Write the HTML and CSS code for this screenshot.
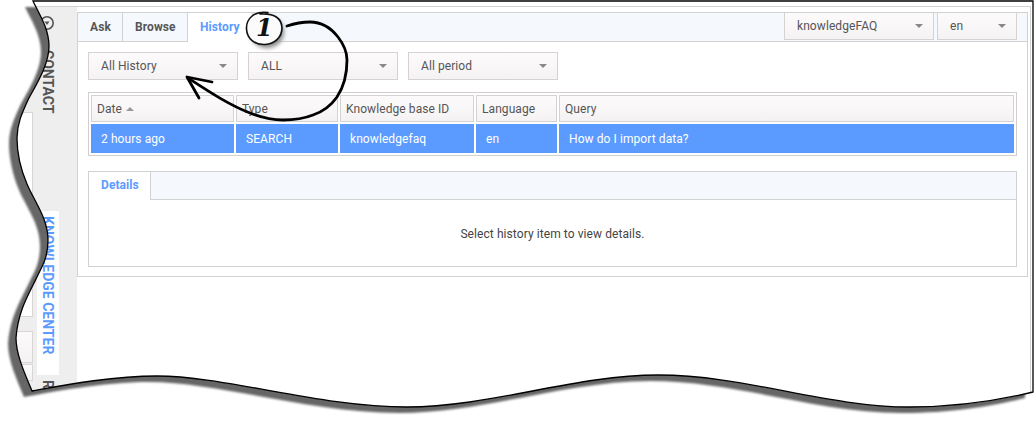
FILE: index.html
```html
<!DOCTYPE html>
<html lang="en">
<head>
<meta charset="utf-8">
<title>Knowledge Center History</title>
<link rel="stylesheet" href="styles.css">
</head>
<body>
<div class="stage">
  <div class="app">
    <div class="leftcol">
      <div class="lbox lbox-a"></div>
      <div class="lbox lbox-b"></div>
      <div class="lbox lbox-c"></div>
    </div>
    <div class="rail">
      <svg class="rail-icon" width="16" height="16" viewBox="0 0 16 16"><circle cx="8" cy="8" r="6.2" fill="none" stroke="#555" stroke-width="1.6"/><path d="M5.5 6.5h5L8 10z" fill="#555"/></svg>
      <div class="rail-item contact"><span class="vtext">CONTACT</span></div>
      <div class="rail-item knowledge"><span class="vtext">KNOWLEDGE CENTER</span></div>
      <div class="rail-item rest"><span class="vtext">R</span></div>
    </div>
    <main class="main">
      <section class="panel">
        <div class="tabbar">
          <div class="tab">Ask</div>
          <div class="tab">Browse</div>
          <div class="tab tab-active">History</div>
          <div class="bar-right">
            <div class="select select-kb"><span>knowledgeFAQ</span><i class="caret"></i></div>
            <div class="select select-lang"><span>en</span><i class="caret"></i></div>
          </div>
        </div>
        <div class="panel-body">
          <div class="filters">
            <div class="select select-filter"><span>All History</span><i class="caret"></i></div>
            <div class="select select-filter"><span>ALL</span><i class="caret"></i></div>
            <div class="select select-filter"><span>All period</span><i class="caret"></i></div>
          </div>
          <div class="grid">
            <div class="gcell head">Date<i class="sort"></i></div>
            <div class="gcell head">Type</div>
            <div class="gcell head">Knowledge base ID</div>
            <div class="gcell head">Language</div>
            <div class="gcell head">Query</div>
            <div class="gcell row">2 hours ago</div>
            <div class="gcell row">SEARCH</div>
            <div class="gcell row">knowledgefaq</div>
            <div class="gcell row">en</div>
            <div class="gcell row">How do I import data?</div>
          </div>
          <div class="details">
            <div class="details-bar"><div class="details-tab">Details</div></div>
            <div class="details-body">Select history item to view details.</div>
          </div>
        </div>
      </section>
    </main>
  </div>

  <svg class="overlay" width="1034" height="424" viewBox="0 0 1034 424">
    <defs>
      <path id="page" d="M33 1 C38 12 49 28 49 46 C49 66 34 88 28 100 C22 113 17 124 17 138 C17 152 21 170 27 184 C34 201 48 218 48 240 C48 259 41 268 37 277 C30 292 18 310 16 338 C16 354 24 372 32 391 C60 386 110 376 157 376 C225 376 320 407 407 407 C490 407 575 375 658 375 C745 375 825 407 910 407 C960 407 1000 400 1033 392 L1033 1 Z"/>
      <clipPath id="outside"><path clip-rule="evenodd" d="M0 0H1034V424H0Z M33 1 C38 12 49 28 49 46 C49 66 34 88 28 100 C22 113 17 124 17 138 C17 152 21 170 27 184 C34 201 48 218 48 240 C48 259 41 268 37 277 C30 292 18 310 16 338 C16 354 24 372 32 391 C60 386 110 376 157 376 C225 376 320 407 407 407 C490 407 575 375 658 375 C745 375 825 407 910 407 C960 407 1000 400 1033 392 L1033 1 Z"/></clipPath>
      <filter id="soft" x="-5%" y="-5%" width="110%" height="110%"><feGaussianBlur stdDeviation="1.3"/></filter>
      <filter id="glow" x="-40%" y="-40%" width="180%" height="180%"><feGaussianBlur stdDeviation="2.2"/></filter>
    </defs>
    <path fill="#fff" fill-rule="evenodd" d="M0 0H1034V424H0Z M33 1 C38 12 49 28 49 46 C49 66 34 88 28 100 C22 113 17 124 17 138 C17 152 21 170 27 184 C34 201 48 218 48 240 C48 259 41 268 37 277 C30 292 18 310 16 338 C16 354 24 372 32 391 C60 386 110 376 157 376 C225 376 320 407 407 407 C490 407 575 375 658 375 C745 375 825 407 910 407 C960 407 1000 400 1033 392 L1033 1 Z"/>
    <g clip-path="url(#outside)">
      <use href="#page" x="-8" y="6" fill="#666" filter="url(#soft)"/>
    </g>
    <use href="#page" fill="none" stroke="#000" stroke-width="1.3"/>

    <ellipse cx="267" cy="32" rx="17" ry="16" fill="#888" filter="url(#glow)"/>
    <ellipse cx="264" cy="28.5" rx="17" ry="16" fill="#fbfbfb"/>
    <path d="M268 12.5 C254 10.5 246 19 246.5 29 C247 39 255 45 265 44.5 C275 44 282 37 282 28 C282 19 275 13 260 14" fill="none" stroke="#111" stroke-width="1.6" stroke-linecap="round"/>
    <text class="num" x="256" y="36">1</text>
    <path d="M287 26 C296 23 303 22 310 22 C322 22 331 28 338 37 C345 46 347 53 347 60 C347 75 343 88 337 97 C330 107 322 112 313 115 C303 119 293 120 283 120 C271 120 260 117 250 113 C229 105 208 91 188 78" fill="none" stroke="#000" stroke-width="2.8" stroke-linecap="round"/>
    <path d="M212 82 L187 77 L199 98" fill="none" stroke="#000" stroke-width="2.8" stroke-linecap="round" stroke-linejoin="round"/>
  </svg>
</div>
</body>
</html>
```

FILE: styles.css
```css
html, body { margin: 0; padding: 0; background: #fff; }
body { font-family: Roboto, "Liberation Sans", sans-serif; font-size: 12px; color: #555; letter-spacing: .08px; }
.stage { position: relative; width: 1034px; height: 424px; overflow: hidden; background: #fff; }
.app { display: flex; width: 1031px; box-sizing: border-box; height: 417px; margin-top: 6px; border-top: 1px solid #d2d2d2; border-right: 1px solid #d2d2d2; }

.leftcol { width: 33px; flex: none; background: #eee; display: flex; flex-direction: column; align-items: stretch; padding-top: 105px; box-sizing: border-box; }
.lbox { border: 1px solid #d9d5d5; border-left: 0; box-sizing: border-box; background: #fff; }
.lbox-a { height: 205px; }
.lbox-b { height: 32px; margin-top: 14px; background: linear-gradient(#fdfafc, #f4f2f3); }
.lbox-c { height: 17px; margin-top: 1px; background: linear-gradient(#fdfafc, #f4f2f3); }

.rail { width: 44px; flex: none; background: #eee; display: flex; flex-direction: column; align-items: stretch; padding-top: 8px; box-sizing: border-box; }
.rail-icon { display: block; flex: none; margin: 0 0 0 6px; }
.rail-item { flex: none; display: flex; justify-content: center; font-size: 14px; font-weight: 700; color: #555; line-height: 22px; margin-left: 4px; padding-right: 1px; width: 22px; box-sizing: border-box; letter-spacing: 0; }
.vtext { writing-mode: vertical-rl; white-space: nowrap; }
.contact { height: 180px; padding-top: 19px; }
.knowledge { height: 164px; background: #fff; color: #5b9bff; padding-top: 5px; }
.rest { margin-top: 5px; }

.main { flex: 1; min-width: 0; padding: 5px 2px 0 0; background: #fff; }
.panel { border: 1px solid #d2d2d2; height: 265px; box-sizing: border-box; background: #fff; }

.tabbar { display: flex; height: 29px; box-sizing: border-box; background: #f5f9fe; border-bottom: 1px solid #d2d2d2; }
.tab { padding: 0 12px; line-height: 28px; font-weight: 700; color: #555; border-right: 1px solid #d2d2d2; margin-bottom: -1px; box-sizing: border-box; }
.tab:nth-child(1) { width: 45px; }
.tab:nth-child(2) { width: 65px; }
.tab-active { color: #5b9bff; background: #fff; width: 65px; height: 29px; }
.bar-right { margin-left: auto; display: flex; gap: 3px; padding-right: 10px; }

.select { display: flex; align-items: center; justify-content: space-between; box-sizing: border-box; border: 1px solid #d7d2d2; background: linear-gradient(#fdfafc 0%, #faf7f9 45%, #f4f2f3 100%); padding: 0 10px 0 12px; color: #555; }
.select-kb { width: 150px; height: 27px; border-top: 0; }
.select-lang { width: 80px; height: 27px; border-top: 0; }
.select-filter { width: 150px; height: 28px; }
.caret { width: 0; height: 0; border-left: 4px solid transparent; border-right: 4px solid transparent; border-top: 4px solid #888; }

.panel-body { padding: 10px 10px 0 10px; }
.filters { display: flex; gap: 10px; }
.grid { display: grid; grid-template-columns: 145px 104px 136px 83px 1fr; grid-template-rows: 27px 29px; row-gap: 2px; column-gap: 0; margin-top: 12px; border: 1px solid #d2cece; padding: 2px; height: 64px; box-sizing: border-box; }
.gcell { display: flex; align-items: center; box-sizing: border-box; }
.head { background: linear-gradient(#fdfafc 0%, #faf7f9 45%, #f4f2f3 100%); border: 1px solid #d7d2d2; padding-left: 5px; margin-right: 2px; color: #555; }
.head:nth-child(5) { margin-right: 0; }
.row { background: #5b9bff; color: #fff; padding-left: 10px; border-right: 2px solid #fff; }
.row:last-child { border-right: 0; }
.sort { display: inline-block; width: 0; height: 0; margin-left: 4px; border-left: 4px solid transparent; border-right: 4px solid transparent; border-bottom: 4px solid #999; }

.details { margin-top: 15px; border: 1px solid #d2d2d2; height: 96px; box-sizing: border-box; }
.details-bar { height: 28px; box-sizing: border-box; background: #f5f9fe; border-bottom: 1px solid #d2d2d2; display: flex; }
.details-tab { width: 62px; height: 28px; box-sizing: border-box; background: #fff; border-right: 1px solid #d2d2d2; padding-left: 12px; line-height: 27px; font-weight: 700; color: #5b9bff; }
.details-body { text-align: center; padding-top: 27px; line-height: 14px; color: #444; }

.overlay { position: absolute; left: 0; top: 0; }
.num { font-family: "DejaVu Serif", serif; font-style: italic; font-weight: 700; font-size: 24px; fill: #111; }
```
